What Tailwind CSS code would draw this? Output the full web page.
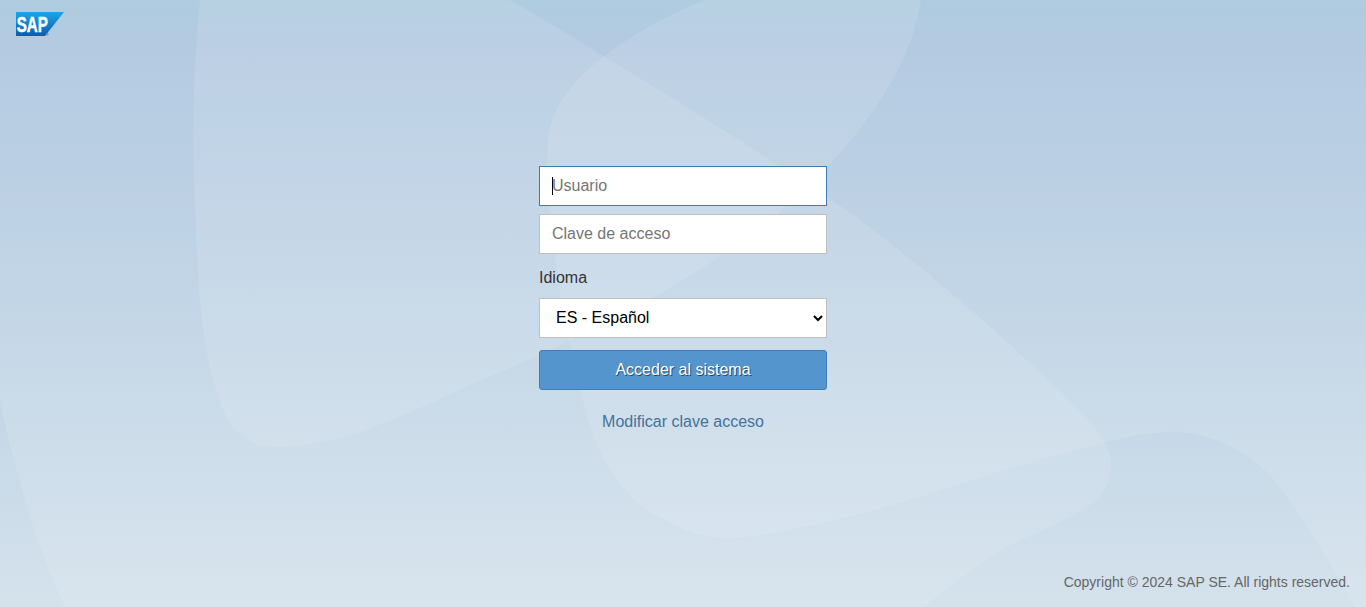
<!DOCTYPE html>
<html lang="es">
<head>
<meta charset="utf-8">
<title>SAP</title>
<script src="https://cdn.jsdelivr.net/npm/@tailwindcss/browser@4"></script>
</head>
<body class="m-0">
<div class="relative w-full h-[607px] overflow-hidden bg-[linear-gradient(180deg,#a6c6dd_0%,#abc4de_8%,#bcd1e4_50%,#d4e2ec_100%)] font-['Liberation_Sans',Arial,sans-serif]">
  <svg class="absolute inset-0 w-full h-full" viewBox="0 0 1366 607" fill="#fff" fill-opacity="0.11" aria-hidden="true">
    <path d="M510 0 C610 58 720 128 810 185 C900 245 1010 340 1085 417 C1103 435 1112 450 1111 467 C1110 485 1102 498 1088 507 C1065 520 1040 532 1014 543 C980 563 950 585 924 607 L65 607 C40 555 20 490 0 403 L0 0 Z"/>
    <path d="M705 0 C660 18 625 40 606 55 C572 80 551 108 548 140 C544 200 558 285 570 345 C578 385 588 425 598 446 C615 485 640 510 666 520 C690 535 715 540 740 538 C800 530 860 515 909 500 C980 478 1050 455 1106 442 C1135 435 1160 431 1180 432 C1215 435 1245 450 1270 475 C1305 520 1335 570 1355 607 L1366 607 L1366 0 Z"/>
    <path d="M200 0 C193 70 192 140 195 200 C197 270 200 335 213 380 C220 405 228 425 241 435 C250 443 262 447 275 447 C298 447 320 443 344 437 C395 422 440 398 482 380 C600 330 720 270 810 185 C865 130 912 65 921 0 Z"/>
  </svg>

  <div class="absolute left-4 top-3">
    <svg width="48" height="25" viewBox="0 0 48 25" aria-label="SAP">
      <defs>
        <linearGradient id="sapg" x1="0" y1="0" x2="0" y2="1">
          <stop offset="0" stop-color="#1ba6e8"/>
          <stop offset="1" stop-color="#0a5cb2"/>
        </linearGradient>
      </defs>
      <path d="M0 0 H48 L29 24 H0 Z" fill="url(#sapg)"/>
      <text x="0.8" y="19.5" font-family="Liberation Sans, Arial, sans-serif" font-size="22" font-weight="700" fill="#fff" stroke="#fff" stroke-width="0.5" textLength="31" lengthAdjust="spacingAndGlyphs">SAP</text>
      <circle cx="31.3" cy="22.3" r="1.2" fill="#6f93c8"/>
    </svg>
  </div>

  <main class="absolute left-[539px] top-[166px] w-[288px] flex flex-col">
    <div class="relative h-10 w-full bg-white border border-[#3d7cb0] flex items-center pl-3 text-base">
      <span class="absolute left-3 top-[10px] w-px h-[18px] bg-black"></span>
      <input class="w-full bg-transparent outline-none placeholder:text-[#757575]" placeholder="Usuario" aria-label="Usuario">
    </div>
    <div class="mt-2 h-10 w-full bg-white border border-[#c0c0c0] flex items-center pl-3 text-base">
      <input class="w-full bg-transparent outline-none placeholder:text-[#757575]" placeholder="Clave de acceso" aria-label="Clave de acceso">
    </div>
    <label class="mt-[15px] h-[18px] leading-[18px] text-base text-[#333]">Idioma</label>
    <select class="mt-[11px] h-10 w-full bg-white border border-[#c0c0c0] pl-3 pb-[2px] text-base text-black" aria-label="Idioma">
      <option>ES - Español</option>
    </select>
    <button class="mt-3 h-10 w-full rounded-[3px] bg-[#5495cd] border border-[#3d7fb8] text-white text-base [text-shadow:1px_1px_0_rgba(0,0,0,.55)]">Acceder al sistema</button>
    <a class="mt-[23px] text-center text-base leading-[18px] text-[#44729a]">Modificar clave acceso</a>
  </main>

  <footer class="absolute right-4 top-[574px] text-sm leading-4 text-[#666]">Copyright © 2024 SAP SE. All rights reserved.</footer>
</div>
</body>
</html>
